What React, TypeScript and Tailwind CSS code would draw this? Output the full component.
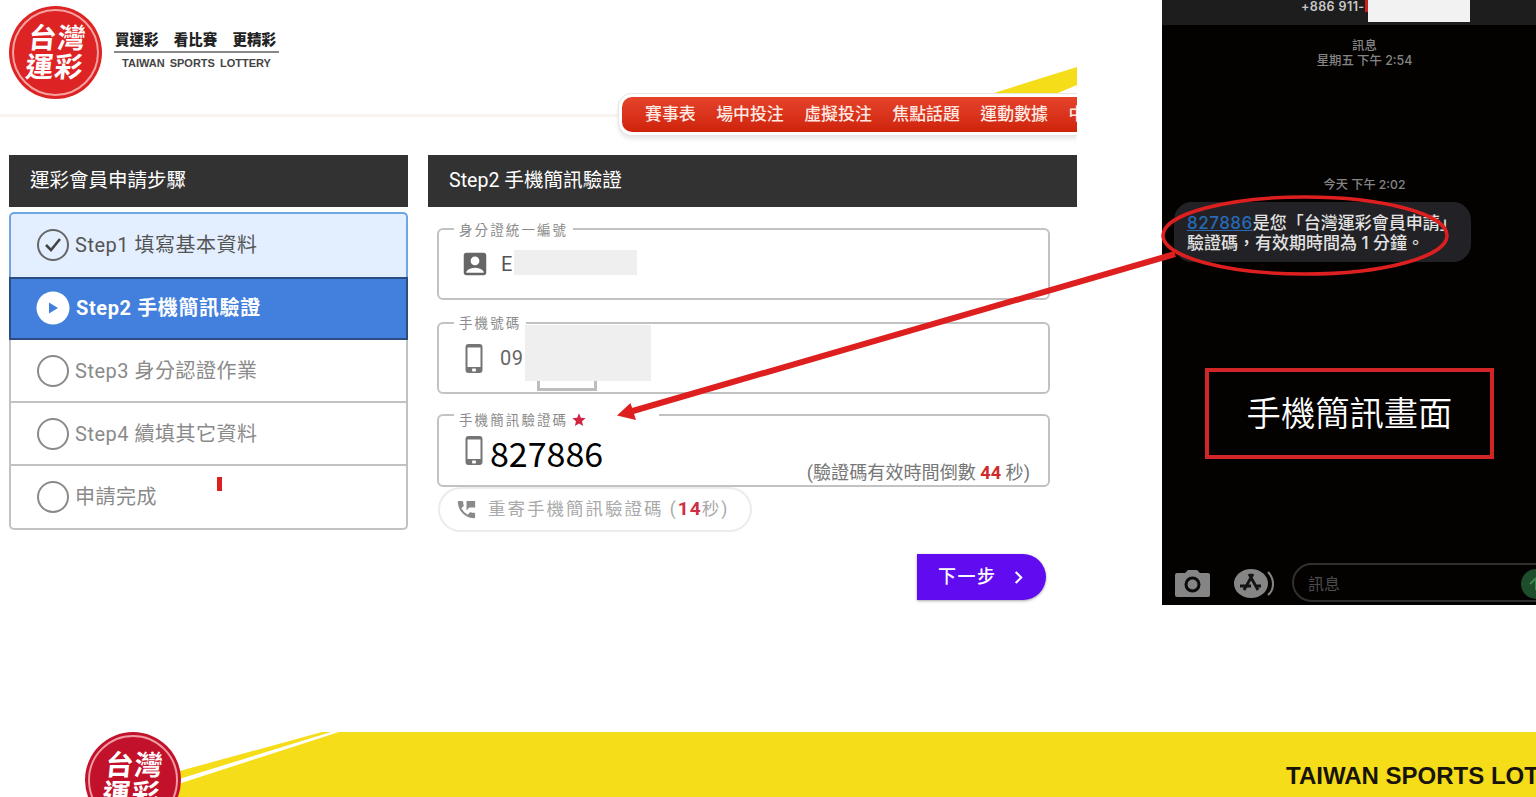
import React from 'react';
import { MdAccountBox, MdPermPhoneMsg, MdChevronRight, MdStar } from 'react-icons/md';

const navItems = ['賽事表', '場中投注', '虛擬投注', '焦點話題', '運動數據', '中'];

const Logo = ({ className, ring }: { className: string; ring: string }) => (
  <div className={`rounded-full p-[3px] shrink-0 ${className}`}>
    <div className={`w-full h-full rounded-full border-2 ${ring} flex items-center justify-center`}>
      <div className="grid grid-cols-2 gap-x-[1px] text-[28px] leading-[29px] font-bold text-white -skew-x-6">
        <span>台</span>
        <span>灣</span>
        <span>運</span>
        <span>彩</span>
      </div>
    </div>
  </div>
);

const PhoneIcon = ({ className }: { className: string }) => (
  <svg className={`shrink-0 ${className}`} width="20" height="31" fill="#757575">
    <path
      fillRule="evenodd"
      d="M4.500 1h11q3 0 3 3v23q0 3-3 3h-11q-3 0-3-3V4q0-3 3-3zM3.500 4.500v19.500h13V4.500z"
    />
    <rect x="8" y="25.500" width="4" height="3" rx="1" fill="#fff" />
  </svg>
);

const Header = () => (
  <header className="relative h-[155px] overflow-hidden">
    <div className="absolute left-0 top-[114px] w-full h-[3px] bg-[#f7f5ee]" />
    <svg className="absolute left-[990px] top-[60px]" width="87" height="40">
      <polygon points="4,33 87,7 87,25 68,33" fill="#f5dd19" />
    </svg>

    <div className="flex pl-[9px] pt-[6px]">
      <Logo className="w-[93px] h-[93px] bg-[#dd2323]" ring="border-[#f5a3a0]" />
      <div className="ml-3 mt-[24px] w-[165px]">
        <div className="flex justify-between pl-[1px] pr-[3px] text-[14.5px] leading-[21px] font-black text-[#222]">
          <span>買運彩</span>
          <span>看比賽</span>
          <span>更精彩</span>
        </div>
        <div className="h-[2px] bg-[#888]" />
        <div className="mt-[2px] text-center text-[11px] leading-[16px] font-bold text-[#444] [word-spacing:2px] whitespace-nowrap font-['Liberation_Sans',sans-serif]">
          TAIWAN SPORTS LOTTERY
        </div>
      </div>
    </div>

    {/* Main navigation, runs off the right edge */}
    <nav className="relative -mt-[6px] ml-[618px] h-[43px] pl-[3px] py-[3px] bg-white border border-r-0 border-[#e6e6e6] rounded-l-[14px] shadow-[0_3px_4px_rgba(0,0,0,0.1)]">
      <div className="h-full flex items-center gap-[20.5px] pl-[23px] rounded-l-[10px] bg-gradient-to-b from-[#e5432b] to-[#cf2209] overflow-hidden text-[16.9px] font-medium text-[#ffe9e2] whitespace-nowrap">
        {navItems.map((item) => (
          <span key={item}>{item}</span>
        ))}
      </div>
    </nav>
  </header>
);

const Steps = () => (
  <aside className="w-[399px] shrink-0">
    <h2 className="h-[52px] pl-[21px] bg-[#323232] text-[19.5px] leading-[52px] text-white">運彩會員申請步驟</h2>
    <ol className="mt-[5px] text-[20px] tracking-[0.5px] text-[#8a8a8a]">
      <li className="h-[65px] flex items-center gap-[5px] pl-[25px] pb-[2px] rounded-t-[5px] border-2 border-b-0 border-[#6fa5e3] bg-[#e3efff] text-[#555]">
        <svg width="34" height="34" fill="none" stroke="#444">
          <circle cx="17" cy="17" r="15" strokeWidth="2" stroke="#666" />
          <path d="M10 17l5 5 9-11" strokeWidth="2.6" />
        </svg>
        Step1 填寫基本資料
      </li>
      <li className="h-[63px] flex items-center gap-[6px] pl-[25px] pb-[1px] border-2 border-[#2b4d80] bg-[#437fdc] font-bold text-white tracking-[0.6px]">
        <svg width="34" height="34">
          <circle cx="17" cy="17" r="16.5" fill="#fff" />
          <path d="M13 11.5v11l9-5.5z" fill="#437fdc" />
        </svg>
        Step2 手機簡訊驗證
      </li>
      {['Step3 身分認證作業', 'Step4 續填其它資料', '申請完成'].map((label) => (
        <li
          key={label}
          className="relative h-[63px] flex items-center gap-[5px] pl-[25px] border-x-2 border-b-2 border-[#c2c2c2] bg-white last:rounded-b-[5px] last:h-[64px]"
        >
          <svg width="34" height="34" fill="none" stroke="#8a8a8a">
            <circle cx="17" cy="17" r="15" strokeWidth="2" />
          </svg>
          {label}
          {label === '申請完成' && <i className="absolute left-[206px] top-[11px] w-[5px] h-[14px] bg-[#dc1f1f]" />}
        </li>
      ))}
    </ol>
  </aside>
);

const Field = ({
  label,
  className,
  labelClass,
  children,
}: {
  label: React.ReactNode;
  className: string;
  labelClass: string;
  children: React.ReactNode;
}) => (
  <div className={`relative border-2 border-[#c2c2c2] rounded-[6px] ${className}`}>
    <span
      className={`absolute left-[15px] h-[18px] flex items-center px-[5px] bg-white text-[13.5px] tracking-[2.100px] text-[#8a8a8a] whitespace-nowrap ${labelClass}`}
    >
      {label}
    </span>
    {children}
  </div>
);

const VerifyForm = () => (
  <section className="w-[649px] shrink-0">
    <h2 className="h-[52px] pl-[21px] bg-[#323232] text-[19.6px] leading-[52px] text-white">Step2 手機簡訊驗證</h2>
    <div className="pl-[9px] pr-[27px] pt-[21px]">
      <Field label="身分證統一編號" className="h-[72px]" labelClass="-top-[9px]">
        <div className="flex items-center h-full pl-[21px]">
          <MdAccountBox className="text-[#666]" size={30} />
          <span className="ml-[11px] w-[13px] text-[20px] text-[#555] overflow-hidden">E</span>
          <span className="w-[123px] h-[25px] bg-[#efefef] -mt-[4px]" />
        </div>
      </Field>

      <Field label="手機號碼" className="h-[72px] mt-[22px]" labelClass="-top-[10px]">
        <div className="flex items-center h-full pl-[25px]">
          <PhoneIcon className="" />
          <span className="ml-[16px] w-[25px] text-[20px] tracking-[0.5px] text-[#666]">09</span>
        </div>
        <div className="absolute left-[86px] top-[1px] w-[126px] h-[56px] bg-[#efefef]" />
        <div className="absolute left-[98px] top-[57px] w-[60px] h-[10px] border-[3px] border-t-0 border-[#bdbdbd]" />
      </Field>

      <Field
        label={
          <>
            手機簡訊驗證碼
            <MdStar className="text-[#d2233f] ml-[3px] mr-[67px]" size={16} />
          </>
        }
        className="h-[73px] mt-[20px]"
        labelClass="-top-[5px]"
      >
        <div className="flex items-start h-full pl-[25px]">
          <PhoneIcon className="mt-[19px]" />
          <span className="ml-[6px] text-[34px] leading-[34px] mt-[20px] text-black font-['Noto_Sans_CJK_TC',sans-serif]">
            827886
          </span>
          <span className="ml-auto mt-[45px] mr-[18px] text-[18.1px] leading-[24px] text-[#777]">
            (驗證碼有效時間倒數 <b className="text-[#d12a2a]">44</b> 秒)
          </span>
        </div>
      </Field>

      <button className="flex items-center w-[314px] h-[45px] pl-[15px] ml-[1px] rounded-full border-2 border-[#ececec] text-[17.5px] tracking-[2px] text-[#aaa] whitespace-nowrap">
        <MdPermPhoneMsg className="text-[#8a8a8a] mr-[10px] shrink-0" size={23} />
        重寄手機簡訊驗證碼 (<b className="text-[19px] tracking-[1px] text-[#cf2f42]">14</b>秒)
      </button>

      <button className="flex items-center w-[129px] h-[46px] mt-[22px] ml-auto mr-[4px] pl-[21px] pb-[1px] rounded-r-full bg-[#610cf0] text-[18px] tracking-[1.5px] font-medium text-white shadow-[0_1px_3px_rgba(0,0,0,0.35)]">
        下一步
        <MdChevronRight className="ml-[9px] mt-[2px]" size={25} />
      </button>
    </div>
  </section>
);

const Phone = () => (
  <div className="relative w-[374px] h-[605px] shrink-0 bg-[#040101] overflow-hidden flex flex-col font-['Inter','Noto_Sans_CJK_TC',sans-serif]">
    <div className="h-[25px] shrink-0 bg-[#1d1d1d] flex pl-[139px] text-[12.5px] leading-[13px] font-semibold tracking-[0.400px] text-[#c8c8c8] whitespace-nowrap">
      <span className="w-[64px]">+886 911-</span>
      <span className="w-[3px] h-[12px] bg-[#c92020]" />
      <span className="w-[102px] h-[22px] bg-[#f2f2f2]" />
    </div>
    <div className="mt-[13px] pl-[31px] text-center text-[12.4px] leading-[15px] text-[#858585] font-medium">
      訊息
      <br />
      星期五 下午 2:54
    </div>
    <div className="mt-[109px] pl-[31px] text-center text-[12.2px] leading-[15px] text-[#858585] font-medium">今天 下午 2:02</div>
    <div className="mt-[10px] ml-[12px] w-[297px] h-[60px] rounded-[18px] bg-[#222226] pl-[13px] pt-[11px] text-[17px] leading-[20px] font-medium text-[#e2e2e2] whitespace-nowrap">
      <span className="text-[#276ab5] underline tracking-[0.5px]">827886</span>是您「台灣運彩會員申請」
      <br />
      驗證碼，有效期時間為 1 分鐘。
    </div>
    <div className="mt-[106px] ml-[43px] w-[289px] h-[91px] border-[4px] border-[#d22525] flex items-center justify-center text-[34.300px] font-[350] text-white">
      手機簡訊畫面
    </div>

    {/* Message input bar */}
    <div className="mt-[104px] flex items-start">
      <svg className="ml-[12px] mt-[6px] shrink-0" width="37" height="29" fill="#858585">
        <path d="M3 4h8l3-3h9l3 3h8q2 0 2 2v20q0 2-2 2H3q-2 0-2-2V6q0-2 2-2z" />
        <circle cx="18.500" cy="15.500" r="6.500" fill="none" stroke="#0b0909" strokeWidth="3" />
      </svg>
      <svg className="ml-[22px] mt-[5px] shrink-0" width="43" height="31" fill="none">
        <path d="M35 4q5 5 5 12t-5 11" stroke="#858585" strokeWidth="2" />
        <ellipse cx="18" cy="15.500" rx="17" ry="14.500" fill="#858585" />
        <path d="M16 6l9 16M20 6l-9 16M7 18h11M22 18h6" stroke="#141212" strokeWidth="2.800" />
      </svg>
      <div className="ml-[16px] w-[270px] h-[39px] shrink-0 rounded-full border-2 border-[#303030] flex items-center pl-[14px] pt-[2px] text-[16px] text-[#4c4c4c]">
        訊息
      </div>
    </div>
    <div className="absolute left-[359px] top-[569px] w-[31px] h-[30px] rounded-full bg-[#1d4d2a]">
      <svg width="16" height="30" fill="none" stroke="#3d8650" strokeWidth="2">
        <path d="M9 15l6-6M15 9v12" />
      </svg>
    </div>
  </div>
);

const Footer = () => (
  <footer className="relative h-[65px] mt-[127px] overflow-hidden">
    <svg className="absolute inset-0" width="1536" height="65" fill="#f5dd19">
      <polygon points="176,40 322,0 331,0 176,48" />
      <polygon points="339,0 1536,0 1536,65 172,65 172,54" />
    </svg>
    <div className="relative flex justify-between pl-[85px]">
      <Logo className="w-[96px] h-[96px] bg-[#c2112a]" ring="border-[#f09aa4]" />
      <div className="w-[250px] mt-[29px] text-[24px] leading-[30px] font-bold text-[#18140a] whitespace-nowrap font-['Liberation_Sans',sans-serif]">
        TAIWAN SPORTS LOT
      </div>
    </div>
  </footer>
);

const App = () => {
  return (
    <div className="relative w-[1536px] h-[797px] overflow-hidden bg-white font-['Roboto','Noto_Sans_CJK_TC',sans-serif]">
      <div className="flex justify-between">
        <main className="w-[1077px] shrink-0">
          <Header />
          <div className="flex gap-[20px] pl-[9px]">
            <Steps />
            <VerifyForm />
          </div>
        </main>
        <Phone />
      </div>
      <Footer />

      {/* Callout from the SMS to the code field */}
      <svg className="absolute inset-0 pointer-events-none" width="1536" height="797" fill="none" stroke="#de1f1f">
        <ellipse cx="1305" cy="235.500" rx="142" ry="38.500" strokeWidth="3.500" />
        <path d="M1175 254L631 411.500" strokeWidth="6" />
        <path d="M617 415.500L630.500 403L636 420z" fill="#de1f1f" stroke="none" />
      </svg>
    </div>
  );
};

export default App;
